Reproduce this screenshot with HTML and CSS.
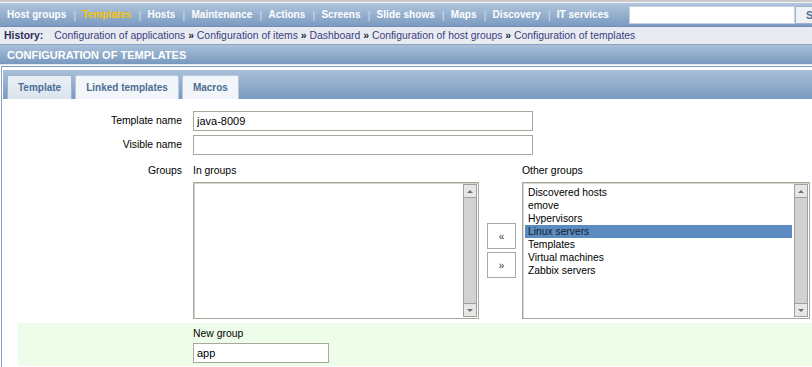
FILE: index.html
```html
<!DOCTYPE html>
<html lang="en">
  <head>
    <meta charset="UTF-8" />
    <title>Configuration of templates</title>
    <link rel="stylesheet" href="styles.css">
  </head>
  <body>
    <div class="page">
      <div class="topline"></div>

      <nav class="menu">
        <a class="menu-item">Host groups</a><span class="sep">|</span>
        <a class="menu-item selected">Templates</a><span class="sep">|</span>
        <a class="menu-item">Hosts</a><span class="sep">|</span>
        <a class="menu-item">Maintenance</a><span class="sep">|</span>
        <a class="menu-item">Actions</a><span class="sep">|</span>
        <a class="menu-item">Screens</a><span class="sep">|</span>
        <a class="menu-item">Slide shows</a><span class="sep">|</span>
        <a class="menu-item">Maps</a><span class="sep">|</span>
        <a class="menu-item">Discovery</a><span class="sep">|</span>
        <a class="menu-item">IT services</a>
        <form class="search">
          <input class="search-input" type="text" />
          <button class="search-btn" type="button">Search</button>
        </form>
      </nav>

      <div class="history">
        <b class="history-title">History:</b>
        <a class="history-link">Configuration of applications</a>
        <b class="arrow">&raquo;</b>
        <a class="history-link">Configuration of items</a>
        <b class="arrow">&raquo;</b>
        <a class="history-link">Dashboard</a>
        <b class="arrow">&raquo;</b>
        <a class="history-link">Configuration of host groups</a>
        <b class="arrow">&raquo;</b>
        <a class="history-link">Configuration of templates</a>
      </div>

      <div class="page-header">CONFIGURATION OF TEMPLATES</div>

      <div class="panel">
        <ul class="tabs">
          <li class="tab active">Template</li>
          <li class="tab">Linked templates</li>
          <li class="tab">Macros</li>
        </ul>

        <div class="form">
          <div class="form-row">
            <label class="form-label">Template name</label>
            <div class="form-field">
              <input class="text-input wide" type="text" value="java-8009" />
            </div>
          </div>

          <div class="form-row">
            <label class="form-label">Visible name</label>
            <div class="form-field">
              <input class="text-input wide" type="text" value="" />
            </div>
          </div>

          <div class="form-row groups-row">
            <label class="form-label">Groups</label>
            <div class="form-field twin">
              <div class="twin-col">
                <div class="twin-title">In groups</div>
                <div class="listbox">
                  <ul class="options"></ul>
                  <div class="scrollbar">
                    <span class="sb-btn up"></span>
                    <span class="sb-track"></span>
                    <span class="sb-btn down"></span>
                  </div>
                </div>
              </div>

              <div class="move-buttons">
                <button class="move-btn" type="button">&laquo;</button>
                <button class="move-btn" type="button">&raquo;</button>
              </div>

              <div class="twin-col">
                <div class="twin-title">Other groups</div>
                <div class="listbox">
                  <ul class="options">
                    <li>Discovered hosts</li>
                    <li>emove</li>
                    <li>Hypervisors</li>
                    <li class="picked">Linux servers</li>
                    <li>Templates</li>
                    <li>Virtual machines</li>
                    <li>Zabbix servers</li>
                  </ul>
                  <div class="scrollbar">
                    <span class="sb-btn up"></span>
                    <span class="sb-track"></span>
                    <span class="sb-btn down"></span>
                  </div>
                </div>
              </div>
            </div>
          </div>

          <div class="form-row new-row">
            <label class="form-label"></label>
            <div class="form-field">
              <div class="twin-title">New group</div>
              <input class="text-input short" type="text" value="app" />
            </div>
          </div>
        </div>
      </div>
    </div>
  </body>
</html>
```

FILE: styles.css
```css
body {
  margin: 0px;
  background-color: #ffffff;
  font-family: "Liberation Sans", Arial, sans-serif;
  font-size: 10.4px;
  color: #000000;
  overflow: hidden;
}

.page {
  width: 900px;
}

.topline {
  height: 2px;
  background-color: #c9c9c9;
  border-bottom: 1px solid #f4f4f4;
}

/* main menu */
.menu {
  display: flex;
  align-items: center;
  height: 22px;
  padding: 1px 0 0 7px;
  background: linear-gradient(#b0c5dc, #7b9bc1);
  border-bottom: 1px solid #6e8fb6;
  font-size: 10px;
}

.menu-item {
  color: #ffffff;
  font-weight: bold;
  line-height: 12px;
  letter-spacing: 0.04px;
}

.menu-item.selected {
  color: #f5c50c;
}

.sep {
  color: #d6e1ee;
  margin: 0 6px 0 7px;
  width: 3px;
  text-align: center;
}

.search {
  display: flex;
  margin-left: 20px;
}

.search-input {
  width: 166px;
  height: 18px;
  box-sizing: border-box;
  border: 1px solid #c4d2e2;
  background-color: #ffffff;
  padding: 0px;
}

.search-btn {
  height: 18px;
  box-sizing: border-box;
  border: 1px solid #9fb4cc;
  background-color: #eef2f6;
  color: #4d6e93;
  font-family: inherit;
  font-size: 10.4px;
  font-weight: bold;
  padding: 0 8px 0 10px;
}

/* history */
.history {
  height: 17px;
  line-height: 18px;
  padding-left: 4px;
  background-color: #e8ecf0;
  border-bottom: 1px solid #8ba4c2;
  white-space: nowrap;
}

.history-title {
  color: #2e2e5c;
  margin-right: 8px;
}

.history-link {
  color: #3c3c84;
}

.arrow {
  color: #1e1e3c;
}

.page-header {
  height: 19px;
  line-height: 20px;
  padding-left: 7px;
  background: linear-gradient(#aac0d9, #7798be);
  color: #ffffff;
  font-size: 11px;
  font-weight: bold;
  border-bottom: 1px solid #dde5ee;
}

/* panel with tabs */
.panel {
  margin-left: 1px;
  margin-top: 1px;
  border-top: 1px solid #7b99bd;
  border-left: 1px solid #8aa1bd;
  padding: 3px 0 0 1px;
  min-height: 300px;
}

.tabs {
  list-style: none;
  margin: 0px;
  display: flex;
  align-items: flex-end;
  gap: 3px;
  height: 29px;
  padding: 0 0 0 4px;
  background: linear-gradient(#a9bfd8, #7a9ac0);
}

.tab {
  height: 23px;
  line-height: 24px;
  padding: 0 10px 0 10px;
  border: 1px solid #b9c9db;
  border-bottom: none;
  border-radius: 2px 2px 0 0;
  background-color: #f2f5f9;
  color: #4d6e93;
  font-size: 10px;
  font-weight: bold;
}

.tab.active {
  background: linear-gradient(#e9eff5, #dbe4ee);
  border-color: #9db2ca;
}

/* form */
.form {
  margin: 12px 0 0 15px;
}

.form-row {
  display: flex;
  margin-bottom: 4px;
}

.form-label {
  width: 164px;
  flex-shrink: 0;
  padding-right: 11px;
  text-align: right;
  line-height: 20px;
}

.text-input {
  display: block;
  height: 20px;
  box-sizing: border-box;
  border: 1px solid #a9a799;
  padding: 0 3px 0 3px;
  font-family: inherit;
  font-size: 11px;
  color: #000000;
  background-color: #ffffff;
}

.text-input.wide {
  width: 340px;
}

.text-input.short {
  width: 136px;
}

.groups-row {
  margin-top: 4px;
  margin-bottom: 0px;
}

.groups-row .form-label {
  line-height: 12px;
  padding-top: 6px;
}

.twin {
  display: flex;
  align-items: center;
}

.twin-col {
  display: flex;
  flex-direction: column;
}

.twin-title {
  line-height: 12px;
  padding-top: 6px;
  margin-bottom: 5px;
}

.listbox {
  display: flex;
  height: 137px;
  box-sizing: border-box;
  border: 1px solid #a9a799;
  box-shadow: inset 1px 1px 0 #d6d5cc;
  background-color: #ffffff;
}

.twin-col:first-child .listbox {
  width: 286px;
}

.twin-col:last-child .listbox {
  width: 288px;
}

.options {
  list-style: none;
  flex: 1;
  margin: 0px;
  padding: 3px 2px 0 2px;
}

.options li {
  height: 13px;
  line-height: 13px;
  padding-left: 3px;
  font-size: 10.3px;
}

.options li.picked {
  background-color: #5b8bc1;
  color: #141e2a;
}

.scrollbar {
  display: flex;
  flex-direction: column;
  width: 14px;
  margin: 1px 1px 1px 0;
  box-sizing: border-box;
  border: 1px solid #a0a0a0;
  background-color: #d2d2d2;
}

.sb-btn {
  height: 12px;
  background-color: #e6e6e6;
  display: flex;
  align-items: center;
  justify-content: center;
}

.sb-btn.up {
  border-bottom: 1px solid #a0a0a0;
}

.sb-btn.down {
  border-top: 1px solid #a0a0a0;
}

.sb-btn::after {
  content: "";
  border-left: 3px solid transparent;
  border-right: 3px solid transparent;
}

.sb-btn.up::after {
  border-bottom: 3px solid #707070;
}

.sb-btn.down::after {
  border-top: 3px solid #707070;
}

.sb-track {
  flex: 1;
}

.move-buttons {
  display: flex;
  flex-direction: column;
  gap: 3px;
  margin: 23px 6px 0 8px;
}

.move-btn {
  width: 29px;
  height: 26px;
  border: 1px solid #a9a9a9;
  background-color: #ffffff;
  font-family: inherit;
  font-size: 10px;
  padding: 0px;
  color: #333333;
}

.new-row {
  margin-top: 4px;
  background-color: #edfdea;
  padding: 5px 0 3px 0;
}

.new-row .twin-title {
  padding-top: 0px;
  margin-bottom: 3px;
}
```
